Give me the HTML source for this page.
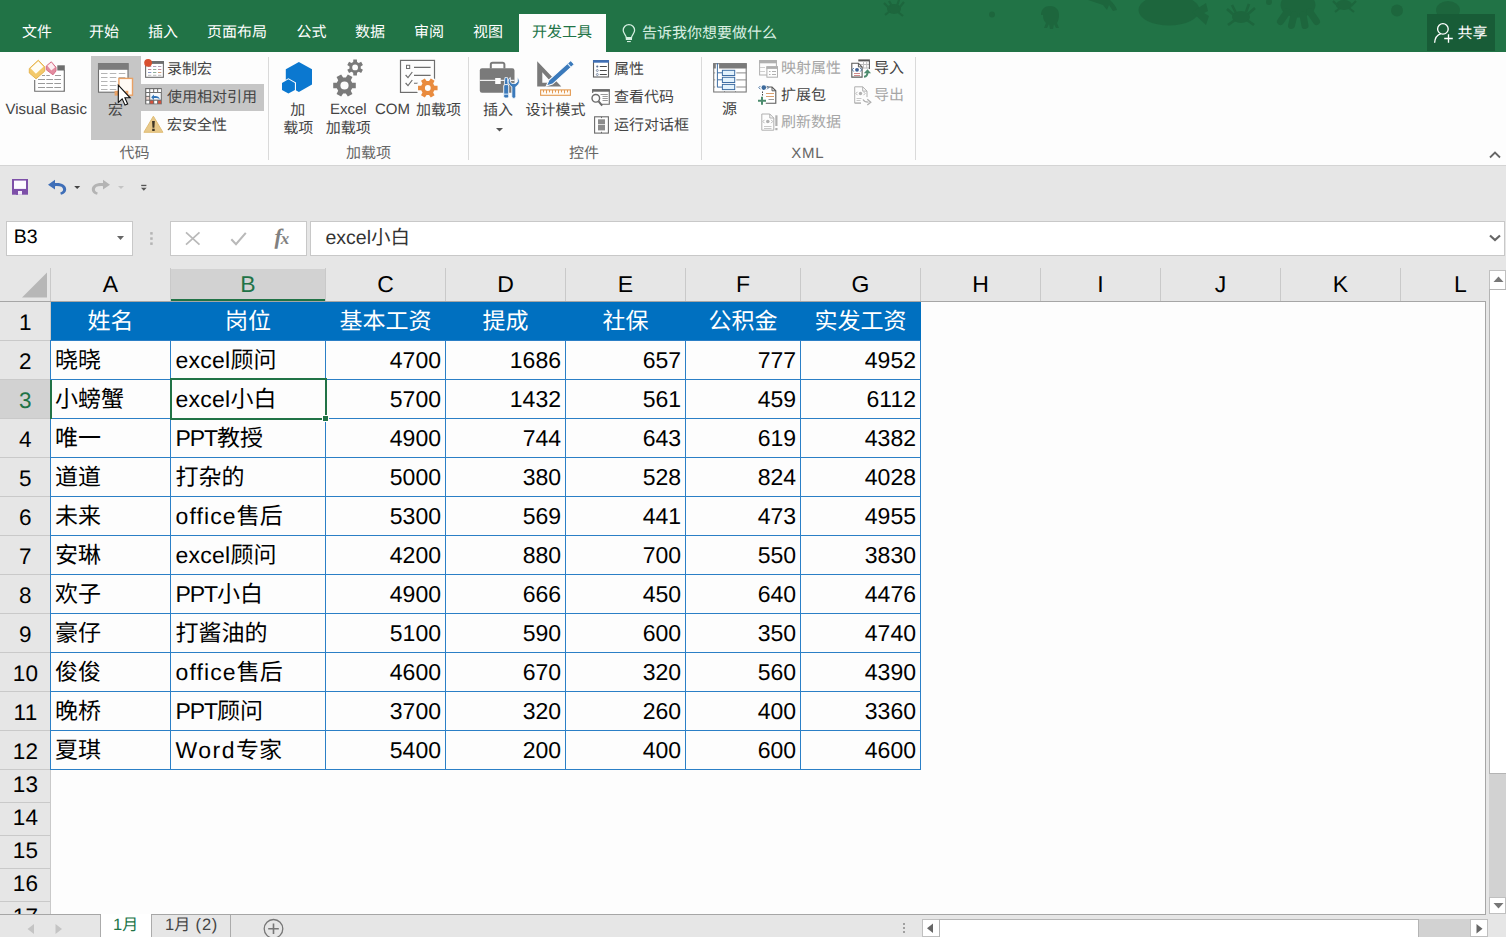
<!DOCTYPE html>
<html lang="zh-CN"><head><meta charset="utf-8"><title>Excel</title>
<style>
html,body{margin:0;padding:0}
body{width:1506px;height:937px;position:relative;overflow:hidden;background:#e6e6e6;font-family:"Liberation Sans","Noto Sans CJK SC",sans-serif;color:#000;text-rendering:geometricPrecision;-webkit-font-smoothing:antialiased}
svg.g{display:block;overflow:visible}
.cell{position:absolute;display:flex;align-items:center;white-space:pre;font-size:23px;line-height:23px}
.cell svg.g{display:inline-block;flex:none}
.cell span{position:relative;top:0.5px}
.ic{position:absolute;overflow:visible}
</style></head><body>

<div style="position:absolute;left:0px;top:0px;width:1506px;height:52px;background:#217346;"></div>
<svg style="position:absolute;left:0;top:0;overflow:hidden" width="1506" height="52" viewBox="0 0 1506 52"><g fill="#1d663d"><ellipse cx="894" cy="9" rx="7" ry="5"/><path d="M884 3l5 5M904 2l-5 6M885 15l5-4M903 16l-5-4M889 1l3 5M899 0l-2 6" stroke="#1d663d" stroke-width="2.2" fill="none"/><circle cx="992" cy="14.5" r="3"/><path d="M1041 15c0-6 4-9 9-9s9 3 9 9c0 4-1 6-2 8l2 5h-3l-2-4-1 5h-3l-1-5-2 4h-3l2-5c-2-2-3-4-3-8z"/><path d="M1088 0h22c3 3 6 6 7 10l-4 1-4-6-2 5-4-5-6-2z"/><ellipse cx="1169" cy="10" rx="30.500" ry="15.500"/><path d="M1192 12l14-9 2 8-4 2 5 3-3 9z"/><ellipse cx="1241" cy="17" rx="9" ry="6"/><path d="M1227 9l7 6M1255 8l-7 6M1228 25l7-5M1254 25l-7-5M1232 5l4 8M1249 4l-3 8" stroke="#1d663d" stroke-width="2.6" fill="none"/><ellipse cx="1298" cy="5" rx="17.500" ry="12.500"/><path d="M1287 12l-6.500 9.500M1294 15l-2.500 10.500M1303 15l2 10.500M1310 12l6.500 9.500" stroke="#1d663d" stroke-width="7" stroke-linecap="round" fill="none"/><circle cx="1269" cy="2" r="3"/><ellipse cx="1344" cy="5" rx="8" ry="5"/><path d="M1333 1l5 5M1356 1l-5 5M1335 12l5-4M1354 12l-5-4" stroke="#1d663d" stroke-width="2.2" fill="none"/><circle cx="1397" cy="10.5" r="6"/><ellipse cx="1448" cy="10" rx="12" ry="9"/></g></svg>
<div style="position:absolute;left:22.00px;top:24.50px;font-size:15px;line-height:15px;color:#fff;white-space:pre;">文件</div>
<div style="position:absolute;left:89.00px;top:24.50px;font-size:15px;line-height:15px;color:#fff;white-space:pre;">开始</div>
<div style="position:absolute;left:148.00px;top:24.50px;font-size:15px;line-height:15px;color:#fff;white-space:pre;">插入</div>
<div style="position:absolute;left:207.00px;top:24.50px;font-size:15px;line-height:15px;color:#fff;white-space:pre;">页面布局</div>
<div style="position:absolute;left:296.50px;top:24.50px;font-size:15px;line-height:15px;color:#fff;white-space:pre;">公式</div>
<div style="position:absolute;left:355.00px;top:24.50px;font-size:15px;line-height:15px;color:#fff;white-space:pre;">数据</div>
<div style="position:absolute;left:414.00px;top:24.50px;font-size:15px;line-height:15px;color:#fff;white-space:pre;">审阅</div>
<div style="position:absolute;left:473.00px;top:24.50px;font-size:15px;line-height:15px;color:#fff;white-space:pre;">视图</div>
<div style="position:absolute;left:519px;top:14px;width:87px;height:38px;background:#fdfdfd;"></div>
<div style="position:absolute;left:532.00px;top:24.50px;font-size:15px;line-height:15px;color:#217346;white-space:pre;">开发工具</div>
<svg class="ic" style="left:0;top:0" width="1506" height="52" viewBox="0 0 1506 52"><g fill="none" stroke="#d6f0e2" stroke-width="1.25"><path d="M626.300 37.700c0-2.500-3.100-3.900-3.100-7.400a5.700 5.700 0 0 1 11.400 0c0 3.500-3.100 4.900-3.100 7.400z"/></g><rect x="625.8" y="37.4" width="6.2" height="2.6" fill="#d6f0e2"/><rect x="627" y="41" width="3.8" height="1.1" fill="#d6f0e2"/></svg>
<div style="position:absolute;left:642.00px;top:25.80px;font-size:15px;line-height:15px;color:#d9efe2;white-space:pre;">告诉我你想要做什么</div>
<div style="position:absolute;left:1427px;top:14px;width:68px;height:37px;background:#185c37;"></div>
<svg class="ic" style="left:0;top:0" width="1506" height="52" viewBox="0 0 1506 52"><g fill="none" stroke="#fff" stroke-width="1.35"><circle cx="1442.9" cy="28.9" r="5.3"/><path d="M1434.6 42.8c0.3-4.6 2.6-7.9 6.2-9.2"/><path d="M1448.5 34.2v8.6M1444.2 38.5h8.6"/></g></svg>
<div style="position:absolute;left:1457.50px;top:25.50px;font-size:15px;line-height:15px;color:#fff;white-space:pre;">共享</div>
<div style="position:absolute;left:0px;top:52px;width:1506px;height:113px;background:#fdfdfd;"></div>
<div style="position:absolute;left:0px;top:165px;width:1506px;height:1px;background:#d4d4d4;"></div>
<div style="position:absolute;left:268px;top:57px;width:1px;height:103px;background:#dadada;"></div>
<div style="position:absolute;left:468px;top:57px;width:1px;height:103px;background:#dadada;"></div>
<div style="position:absolute;left:701px;top:57px;width:1px;height:103px;background:#dadada;"></div>
<div style="position:absolute;left:915px;top:57px;width:1px;height:103px;background:#dadada;"></div>
<div style="position:absolute;left:91px;top:56px;width:50px;height:84px;background:#c6c6c6;"></div>
<div style="position:absolute;left:141px;top:84.2px;width:123px;height:26.5px;background:#c6c6c6;"></div>
<div style="position:absolute;left:5.50px;top:102.30px;font-size:15px;line-height:15px;color:#444;white-space:pre;">Visual Basic</div>
<div style="position:absolute;left:108.00px;top:102.50px;font-size:15px;line-height:15px;color:#444;white-space:pre;">宏</div>
<div style="position:absolute;left:167.00px;top:62.00px;font-size:15px;line-height:15px;color:#444;white-space:pre;">录制宏</div>
<div style="position:absolute;left:167.00px;top:90.00px;font-size:15px;line-height:15px;color:#444;white-space:pre;">使用相对引用</div>
<div style="position:absolute;left:167.00px;top:118.00px;font-size:15px;line-height:15px;color:#444;white-space:pre;">宏安全性</div>
<div style="position:absolute;left:119.50px;top:145.50px;font-size:15px;line-height:15px;color:#666;white-space:pre;">代码</div>
<div style="position:absolute;left:290.25px;top:102.50px;font-size:15px;line-height:15px;color:#444;white-space:pre;">加</div>
<div style="position:absolute;left:283.25px;top:121.25px;font-size:15px;line-height:15px;color:#444;white-space:pre;">载项</div>
<div style="position:absolute;left:148.25px;width:400px;text-align:center;top:102.30px;font-size:15px;line-height:15px;color:#444;white-space:pre;">Excel</div>
<div style="position:absolute;left:325.75px;top:121.25px;font-size:15px;line-height:15px;color:#444;white-space:pre;">加载项</div>
<div style="position:absolute;left:375.00px;top:102.30px;font-size:15px;line-height:15px;color:#444;white-space:pre;">COM</div>
<div style="position:absolute;left:416.00px;top:102.50px;font-size:15px;line-height:15px;color:#444;white-space:pre;">加载项</div>
<div style="position:absolute;left:346.00px;top:145.50px;font-size:15px;line-height:15px;color:#666;white-space:pre;">加载项</div>
<div style="position:absolute;left:483.00px;top:102.50px;font-size:15px;line-height:15px;color:#444;white-space:pre;">插入</div>
<svg class="ic" style="left:496px;top:128px" width="8" height="4"><path d="M0 0h7l-3.5 3.5z" fill="#555"/></svg>
<div style="position:absolute;left:525.50px;top:102.50px;font-size:15px;line-height:15px;color:#444;white-space:pre;">设计模式</div>
<div style="position:absolute;left:614.00px;top:62.00px;font-size:15px;line-height:15px;color:#444;white-space:pre;">属性</div>
<div style="position:absolute;left:614.00px;top:90.00px;font-size:15px;line-height:15px;color:#444;white-space:pre;">查看代码</div>
<div style="position:absolute;left:614.00px;top:118.00px;font-size:15px;line-height:15px;color:#444;white-space:pre;">运行对话框</div>
<div style="position:absolute;left:569.00px;top:145.50px;font-size:15px;line-height:15px;color:#666;white-space:pre;">控件</div>
<div style="position:absolute;left:722.00px;top:102.10px;font-size:15px;line-height:15px;color:#444;white-space:pre;">源</div>
<div style="position:absolute;left:781.00px;top:61.30px;font-size:15px;line-height:15px;color:#a6a6a6;white-space:pre;">映射属性</div>
<div style="position:absolute;left:781.00px;top:88.00px;font-size:15px;line-height:15px;color:#444;white-space:pre;">扩展包</div>
<div style="position:absolute;left:781.00px;top:115.00px;font-size:15px;line-height:15px;color:#a6a6a6;white-space:pre;">刷新数据</div>
<div style="position:absolute;left:874.00px;top:61.30px;font-size:15px;line-height:15px;color:#444;white-space:pre;">导入</div>
<div style="position:absolute;left:874.00px;top:88.00px;font-size:15px;line-height:15px;color:#a6a6a6;white-space:pre;">导出</div>
<div style="position:absolute;left:607.80px;width:400px;text-align:center;top:146.10px;font-size:15px;line-height:15px;color:#666;white-space:pre;letter-spacing:0.8px">XML</div>
<svg class="ic" style="left:1489px;top:150px" width="12" height="9"><path d="M1 7.5l5-5 5 5" fill="none" stroke="#666" stroke-width="1.8"/></svg>
<svg class="ic" style="left:0;top:0" width="1506" height="165" viewBox="0 0 1506 165"><path d="M34.7 80V91.2H64.3V70.4" fill="#fff" stroke="#6e6e6e" stroke-width="1.1"/><path d="M45 71h12.3v-5.2h7.4v25.4" fill="#fff" stroke="none"/><rect x="57.3" y="65.3" width="7.5" height="5.2" fill="#6e6e6e"/><path d="M64.3 70V91.2" stroke="#6e6e6e" stroke-width="1.1"/><path d="M42 75.5H45M46.3 75.5H49.8M55 75.5H61" stroke="#9a9a9a" stroke-width="1" fill="none"/><path d="M38 79.5H45M46.3 79.5H53M54.3 79.5H61M38 83.5H45M46.3 83.5H53M54.3 83.5H61M38 87.5H45M46.3 87.5H53M54.3 87.5H61" stroke="#9a9a9a" stroke-width="1" fill="none"/><path d="M29.3 68.5l9-8.3 6.4 6.6v4.4l-8.6 7.6-6.8-5.8z" fill="#f3c96b" stroke="#e6b450" stroke-width="1"/><path d="M30.6 68.3l7.7-7 5.2 5.5-7.6 6.9z" fill="#fffdf6"/><path d="M46.3 66l5-4.2 4.7 5.5v3.7l-3 3.8-6.7-5z" fill="#e38ca0" stroke="#d66f88" stroke-width="1"/><path d="M47.4 65.7l3.9-3.1 3.8 4.6-3.8 3.3z" fill="#fdeef2"/><rect x="98.5" y="63.7" width="29.5" height="28.5" fill="#fff" stroke="#6e6e6e" stroke-width="1.1"/><rect x="98" y="63.2" width="30.5" height="6.6" fill="#7c7c7c"/><path d="M101 73.5H107.5M109.8 73.5H116.3M118.8 73.5H125.3M101 77.5H107.5M109.8 77.5H116.3M118.8 77.5H125.3M101 81.5H107.5M109.8 81.5H116.3M118.8 81.5H125.3M101 85.5H107.5M109.8 85.5H116.3M118.8 85.5H125.3M101 89.5H107.5M109.8 89.5H116.3M118.8 89.5H125.3" stroke="#b5b5b5" stroke-width="1" fill="none"/><rect x="114.6" y="90.8" width="4.4" height="4.8" fill="#e9a165"/><rect x="118.9" y="78.4" width="13.6" height="16.8" fill="#fffaf5" stroke="#e9a165" stroke-width="1.4"/><rect x="125.3" y="90.8" width="3" height="3.6" fill="#e9a165"/><path d="M118.3 85.2v17.2l3.9-3.6 2.8 6.3 2.7-1.2-2.8-6.1h5.2z" fill="#fff" stroke="#111" stroke-width="1.1" stroke-linejoin="miter"/><rect x="145.6" y="61.6" width="17.8" height="15.7" fill="#fff" stroke="#6e6e6e" stroke-width="1.1"/><rect x="151" y="61.1" width="13" height="2.8" fill="#6e6e6e"/><path d="M148 66.5H151.3M153 66.5H156.3M158 66.5H161.3" stroke="#b0a0b8" stroke-width="1" fill="none"/><path d="M148 69.5H151.3" stroke="#c58a9a" stroke-width="1" fill="none"/><path d="M153 69.5H156.3" stroke="#8fae9a" stroke-width="1" fill="none"/><path d="M158 69.5H161.3" stroke="#c58a9a" stroke-width="1" fill="none"/><path d="M148 72.5H151.3" stroke="#8a9ac8" stroke-width="1" fill="none"/><path d="M153 72.5H156.3" stroke="#8fae9a" stroke-width="1" fill="none"/><path d="M158 72.5H161.3" stroke="#d09a7a" stroke-width="1" fill="none"/><path d="M148 75.3H151.3M153 75.3H156.3M158 75.3H161.3" stroke="#bbb" stroke-width="1" fill="none"/><circle cx="148.1" cy="62.8" r="3.9" fill="#d9502f"/><rect x="145.1" y="88" width="16.7" height="16.3" fill="#6e6e6e"/><rect x="146.30" y="89.20" width="2.9" height="2.8" fill="#fff"/><rect x="150.25" y="89.20" width="2.9" height="2.8" fill="#fff"/><rect x="154.20" y="89.20" width="2.9" height="2.8" fill="#fff"/><rect x="158.15" y="89.20" width="2.9" height="2.8" fill="#fff"/><rect x="146.30" y="93.05" width="2.9" height="2.8" fill="#fff"/><rect x="146.30" y="96.90" width="2.9" height="2.8" fill="#f3d7cf"/><rect x="146.30" y="100.75" width="2.9" height="2.8" fill="#fff"/><rect x="150.25" y="100.75" width="2.9" height="2.8" fill="#d8503a"/><rect x="154.20" y="100.75" width="2.9" height="2.8" fill="#fff"/><rect x="158.15" y="100.75" width="2.9" height="2.8" fill="#d8503a"/><rect x="150.2" y="93" width="10.6" height="6.6" fill="#f6f9fc"/><path d="M151.2 97.3l2.7-2.8v1.7c3-.4 5.3.6 5.9 3.2-1.300-1.200-3.200-1.500-5.900-1.300v1.900z" fill="#2f73b7"/><path d="M153.4 116.2l9.500 16.100h-19z" fill="#e8c98a" stroke="#e0bd76" stroke-width="1" stroke-linejoin="round"/><path d="M152.100 121h2.700l-.4 6.800h-1.900z" fill="#3c3424"/><rect x="152.200" y="128.700" width="2.500" height="2.300" fill="#3c3424"/><path d="M298.9 62l13.100 7.300v15.300l-13.100 7.500-13.100-7.500v-15.300z" fill="#0b78d0"/><path d="M288.400 78.200l7.600 4.200v8l-7.600 4.300-7.400-4.300v-8z" fill="#fdfdfd"/><path d="M288.400 79.300l6.500 3.600v7l-6.500 3.700-6.400-3.700v-7z" fill="#0b78d0"/><path d="M352.19 82.64L355.79 82.85L355.79 88.15L352.19 88.36L350.82 90.73L352.44 93.96L347.85 96.60L345.87 93.59L343.13 93.59L341.15 96.60L336.56 93.96L338.18 90.73L336.81 88.36L333.21 88.15L333.21 82.85L336.81 82.64L338.18 80.27L336.56 77.04L341.15 74.40L343.13 77.41L345.87 77.41L347.85 74.40L352.44 77.04L350.82 80.27ZM340.40 85.50a4.1 4.1 0 1 0 8.2 0a4.1 4.1 0 1 0 -8.2 0Z" fill="#7a7a7a" fill-rule="evenodd"/><path d="M360.71 68.41L362.92 69.85L361.14 72.95L358.78 71.75L357.03 72.76L356.89 75.40L353.31 75.40L353.17 72.76L351.42 71.75L349.06 72.95L347.28 69.85L349.49 68.41L349.49 66.39L347.28 64.95L349.06 61.85L351.42 63.05L353.17 62.04L353.31 59.40L356.89 59.40L357.03 62.04L358.78 63.05L361.14 61.85L362.92 64.95L360.71 66.39ZM352.20 67.40a2.9 2.9 0 1 0 5.8 0a2.9 2.9 0 1 0 -5.8 0Z" fill="#7a7a7a" fill-rule="evenodd"/><rect x="400.500" y="60.400" width="34" height="32" fill="#fdfdfd" stroke="#6e6e6e" stroke-width="1.200"/><rect x="406.500" y="65.300" width="3.200" height="3.200" fill="none" stroke="#6e6e6e" stroke-width="1"/><path d="M414 67.400h16.600M414 75.400h16.600M414 83.200h7" stroke="#6e6e6e" stroke-width="1.100"/><path d="M405.600 75l2.400 2.600 4.300-5.600M405.600 83l2.400 2.600 4.300-5.600" fill="none" stroke="#6e6e6e" stroke-width="1.200"/><circle cx="427.800" cy="88" r="11.300" fill="#fdfdfd"/><path d="M434.39 85.63L437.56 85.82L437.56 90.18L434.39 90.37L433.15 92.52L434.57 95.36L430.79 97.54L429.04 94.89L426.56 94.89L424.81 97.54L421.03 95.36L422.45 92.52L421.21 90.37L418.04 90.18L418.04 85.82L421.21 85.63L422.45 83.48L421.03 80.64L424.81 78.46L426.56 81.11L429.04 81.11L430.79 78.46L434.57 80.64L433.15 83.48ZM424.90 88.00a2.9 2.9 0 1 0 5.8 0a2.9 2.9 0 1 0 -5.8 0Z" fill="#e98b3e" fill-rule="evenodd"/><path d="M490.800 68.500v-4a1.800 1.800 0 0 1 1.800-1.800h10a1.800 1.800 0 0 1 1.800 1.800v4" fill="none" stroke="#7a7a7a" stroke-width="2"/><rect x="479.800" y="68.200" width="34.700" height="24.500" rx="2.200" fill="#7a7a7a"/><rect x="479.800" y="79.800" width="34.700" height="1.100" fill="#fdfdfd"/><rect x="495.200" y="78" width="5.500" height="6" fill="#fdfdfd"/><rect x="502.600" y="76.800" width="16.500" height="22" fill="#fdfdfd" opacity="0"/><path d="M504.900 77.600h2.600l.6 7.200h-3.800z" fill="#3b7abb" stroke="#fdfdfd" stroke-width=".8"/><rect x="503.700" y="84.600" width="5" height="13.400" rx="1.400" fill="#3b7abb" stroke="#fdfdfd" stroke-width=".9"/><rect x="503.700" y="93.600" width="5" height="1.100" fill="#d6e9fa"/><path d="M510.300 77.500c-2.600 1.700-3 6 .4 8.500l1.100.8v9.600a2 2 0 0 0 4 0v-9.600l1.100-.8c3.400-2.500 3-6.800.4-8.500v4.400l-1.700 1.500h-3.600l-1.700-1.500z" fill="#3b7abb" stroke="#fdfdfd" stroke-width=".9"/><path d="M537.200 61.300v25.200h24.100zM542.300 72.300l9.400 10.400h-9.400z" fill="#7a7a7a" fill-rule="evenodd"/><path d="M546.30 86.10L552.56 84.08L574.41 64.30L570.79 60.30L548.94 80.07Z" fill="#3b7abb" stroke="#fdfdfd" stroke-width="1.100"/><path d="M571.08 67.32L567.45 63.32" stroke="#e4f0fb" stroke-width="1.100"/><rect x="540.600" y="89.900" width="29.800" height="5.400" fill="#fffaf4" stroke="#e39a52" stroke-width="1.100"/><path d="M543.500 90v2.400M546.500 90v3.400M549.500 90v2.400M552.500 90v3.400M555.500 90v2.400M558.500 90v3.400M561.500 90v2.400M564.500 90v3.400M567.500 90v2.400" stroke="#e39a52" stroke-width="1"/><rect x="593.500" y="60.600" width="15" height="16.400" fill="#fff" stroke="#5e5e5e" stroke-width="1.100"/><rect x="593" y="60.100" width="16" height="2.600" fill="#3f6fb6"/><path d="M599.800 66.500h7M599.800 70.500h7M599.800 74.500h7" stroke="#4a4a4a" stroke-width="1.200"/><circle cx="597.300" cy="66.500" r="1.100" fill="#5a6e8e"/><circle cx="597.300" cy="70.500" r="1" fill="none" stroke="#5a6e8e" stroke-width=".7"/><circle cx="597.300" cy="74.500" r="1" fill="none" stroke="#5a6e8e" stroke-width=".7"/><path d="M592.700 93v-3.200h16.600v14.400h-7.500" fill="#fff" stroke="#6a6a6a" stroke-width="1.100"/><rect x="592.200" y="89.300" width="17.600" height="2.400" fill="#6a6a6a"/><path d="M600.500 94.500h7.300M602.500 96.500h5.300M602.500 98.500h5.300M602.500 100.500h5.300" stroke="#9a9a9a" stroke-width="1"/><circle cx="595.800" cy="98.300" r="3.800" fill="#fdfdfd" stroke="#6a6a6a" stroke-width="1.400"/><path d="M598.600 101.400l3.600 4.300" stroke="#6a6a6a" stroke-width="2"/><rect x="594.600" y="116.800" width="13.800" height="16.300" fill="#fff" stroke="#6a6a6a" stroke-width="1.100"/><rect x="598" y="119.300" width="7" height="11.100" fill="#8c8c8c"/><rect x="598" y="124" width="7" height="1" fill="#dcdcdc"/><path d="M601.500 116.800v1.300M601.500 131.800v1.300" stroke="#6a6a6a" stroke-width="1"/><rect x="713.700" y="63.700" width="32.500" height="28.300" fill="#fff" stroke="#7a7a7a" stroke-width="1.100"/><rect x="713.200" y="63.200" width="2.600" height="5.300" fill="#7a7a7a"/><rect x="719.100" y="63.200" width="27.600" height="5.300" fill="#7a7a7a"/><path d="M717.400 63.200v24.100M717.400 72.800h5M717.400 79.800h5M717.400 87.100h5" stroke="#3f6ea3" stroke-width="1" fill="none"/><rect x="722.400" y="70.3" width="12.300" height="5.200" fill="#e3f2fc" stroke="#3f6ea3" stroke-width="1"/><rect x="722.400" y="77.3" width="12.300" height="5.200" fill="#e3f2fc" stroke="#3f6ea3" stroke-width="1"/><rect x="722.400" y="84.400" width="12.300" height="5.200" fill="#e3f2fc" stroke="#3f6ea3" stroke-width="1"/><path d="M736.300 72.900h10M736.300 79.900h10M736.300 87h10" stroke="#8a8a8a" stroke-width="1"/><path d="M713.700 72.900h1.500M713.700 79.900h1.500M713.700 87h1.500M724.500 91v1M735.500 91v1" stroke="#8a8a8a" stroke-width="1"/><rect x="759.600" y="60.600" width="16.800" height="14.400" fill="#fdfdfd" stroke="#b0b0b0" stroke-width="1"/><rect x="759.100" y="60.100" width="17.800" height="3.200" fill="#b0b0b0"/><path d="M760 67.500h5M760 71.500h5" stroke="#cfcfcf" stroke-width="1"/><rect x="766.900" y="66.800" width="10.600" height="10.400" fill="#fdfdfd" stroke="#b0b0b0" stroke-width="1"/><rect x="766.400" y="66.300" width="11.600" height="2.600" fill="#b0b0b0"/><path d="M769 71.500h1.500M772 71.500h4M769 74.500h1.500M772 74.500h4" stroke="#b0b0b0" stroke-width="1"/><path d="M766.500 87h5.500l3.800 3.800v12.500h-10" fill="#fff" stroke="#5a5a5a" stroke-width="1.100"/><path d="M772 87v3.800h3.800" fill="none" stroke="#5a5a5a" stroke-width="1"/><path d="M766 93.500h8M766 96.500h8" stroke="#d9a070" stroke-width="1"/><path d="M768.500 99.500h5.500" stroke="#9a9a9a" stroke-width="1"/><circle cx="763.800" cy="87.600" r="2.300" fill="#3d6a9c"/><path d="M760.500 85.900l-1.700 1.700 1.700 1.700M767.100 85.900l1.700 1.700-1.700 1.700" fill="none" stroke="#3d6a9c" stroke-width=".9"/><path d="M762.500 91.500v4.200" stroke="#4a4a4a" stroke-width="1" stroke-dasharray="1.500 1"/><path d="M762 96.800v8M758 100.800h8" stroke="#4c8c6e" stroke-width="2"/><path d="M761.800 114h8l4 4v12.200h-12z" fill="#fdfdfd" stroke="#b0b0b0" stroke-width="1"/><path d="M769.800 114v4h4" fill="none" stroke="#b0b0b0" stroke-width="1"/><circle cx="767.800" cy="121.500" r="1.800" fill="#b0b0b0"/><path d="M764.500 119.800l-1.600 1.700 1.600 1.700M771.100 119.800l1.600 1.700-1.600 1.700" fill="none" stroke="#b0b0b0" stroke-width=".9"/><path d="M764 126.500h7.500M764 128.500h7.500" stroke="#c8c8c8" stroke-width="1"/><rect x="775.300" y="115.300" width="2.200" height="10.700" fill="#b0b0b0"/><rect x="775.300" y="128" width="2.200" height="2.200" fill="#b0b0b0"/><rect x="858.300" y="59.400" width="11.600" height="2" fill="#555"/><path d="M863.500 61v7.300M866.700 61v7.300M860 64.500h9.500M860 68h9.500" stroke="#bdbdbd" stroke-width="1"/><path d="M869.400 61v8" stroke="#555" stroke-width="1"/><path d="M851.800 63.200h6.600l3.700 3.700v10.200h-10.300z" fill="#fff" stroke="#5a5a5a" stroke-width="1.100"/><path d="M858.400 63.200v3.700h3.700" fill="none" stroke="#5a5a5a" stroke-width="1"/><circle cx="857" cy="69.800" r="1.900" fill="#3d5f94"/><path d="M853.800 68l-1.600 1.800 1.600 1.800M860.200 68l1.600 1.800-1.600 1.800" fill="none" stroke="#3d6a9c" stroke-width=".9"/><path d="M854 73.500h6M854 75.500h6" stroke="#d08a8a" stroke-width="1"/><path d="M864 76.800c2.600-.3 3.600-2 3.500-4.800" fill="none" stroke="#4c8c6e" stroke-width="2"/><path d="M863.800 73.200l3.700-4 3.500 4z" fill="#4c8c6e"/><path d="M854.700 86.800h8l4.300 4.300v6M861 103.100h-6.300z M854.700 86.800v16.300" fill="none" stroke="#b0b0b0" stroke-width="1"/><path d="M862.700 86.800v4.300h4.300" fill="none" stroke="#b0b0b0" stroke-width="1"/><circle cx="860.500" cy="93.500" r="1.700" fill="#b0b0b0"/><path d="M857.500 91.800l-1.600 1.700 1.600 1.700M863.500 91.800l1.600 1.700-1.600 1.700" fill="none" stroke="#b0b0b0" stroke-width=".9"/><path d="M856.500 98.500h5M856.500 100.500h4" stroke="#c8c8c8" stroke-width="1"/><path d="M863 99.500c1 2 2.600 2.700 5.500 2.600" fill="none" stroke="#b0b0b0" stroke-width="1.300"/><path d="M867.300 99.200l3.500 3-3.500 2.800" fill="none" stroke="#b0b0b0" stroke-width="1.300"/></svg>
<svg class="ic" style="left:0;top:0" width="1506" height="215" viewBox="0 0 1506 215"><rect x="12" y="179" width="16" height="15.700" fill="#7d4fa8"/><rect x="14" y="180.600" width="12" height="8.300" fill="#fdfaff"/><rect x="18" y="191" width="4" height="3.700" fill="#f3ecfa"/><rect x="16" y="190.200" width="2" height="4.500" fill="#7d4fa8"/><path d="M48 184.700l7-4.900v3.300c6.500-.6 11.200 2 11.200 6.300 0 2.700-1.900 4.500-5.200 5.400l-.8-2.300c2-.7 2.900-1.700 2.900-3.100 0-2.400-3-3.600-8.100-3.200v3.300z" fill="#3f6fb8"/><path d="M74.200 185.900h6l-3 3.100z" fill="#444"/><path d="M110 184.700l-7-4.900v3.300c-6.500-.6-11.200 2-11.200 6.300 0 2.700 1.900 4.500 5.200 5.400l.8-2.300c-2-.7-2.900-1.700-2.900-3.100 0-2.400 3-3.600 8.100-3.200v3.300z" fill="#b4b4b4"/><path d="M118 185.900h6l-3 3.100z" fill="#c4c4c4"/><rect x="141.200" y="184.800" width="5.200" height="1.300" fill="#555"/><path d="M141 187.800h5.600l-2.800 3z" fill="#555"/></svg>
<div style="position:absolute;left:6px;top:221px;width:126px;height:34px;background:#fff;border:1px solid #c8c8c8;box-sizing:border-box;width:127px;height:35px"></div>
<div style="position:absolute;left:170px;top:221px;width:137px;height:35px;background:#fff;border:1px solid #c8c8c8;box-sizing:border-box"></div>
<div style="position:absolute;left:310px;top:221px;width:1195px;height:35px;background:#fff;border:1px solid #c8c8c8;box-sizing:border-box"></div>
<div style="position:absolute;left:13.80px;top:228.49px;font-size:19.5px;line-height:19.5px;color:#000;white-space:pre;">B3</div>
<svg class="ic" style="left:117px;top:236px" width="8" height="5"><path d="M0 0h7l-3.500 4z" fill="#666"/></svg>
<svg class="ic" style="left:0;top:0" width="1506" height="260" viewBox="0 0 1506 260"><path d="M186 232.300l13.500 12.400M199.500 232.300l-13.500 12.400" stroke="#b9b9b9" stroke-width="1.700" fill="none"/><path d="M231.300 239.300l4.700 4.900 9.800-11.300" stroke="#b9b9b9" stroke-width="2.100" fill="none"/><rect x="150.200" y="232.1" width="2.500" height="2.500" fill="#b4b4b4"/><rect x="150.200" y="237.3" width="2.500" height="2.500" fill="#b4b4b4"/><rect x="150.200" y="242.4" width="2.500" height="2.500" fill="#b4b4b4"/></svg><div style="position:absolute;left:274.5px;top:224px;font-family:'Liberation Serif',serif;font-style:italic;font-weight:bold;font-size:22px;line-height:26px;color:#808080;letter-spacing:-1px"><span style="font-size:22px">f</span><span style="font-size:17px">x</span></div>
<div class="cell" style="left:325.5px;top:220.2px;height:35px;font-size:19.5px;line-height:20px;color:#333"><span>excel</span><span>小白</span></div>
<svg class="ic" style="left:1489px;top:234px" width="12" height="8"><path d="M1 1.500l5 4.500 5-4.500" fill="none" stroke="#666" stroke-width="2.2"/></svg>
<div style="position:absolute;left:51px;top:302px;width:1434px;height:612px;background:#fdfdfd;"></div>
<div style="position:absolute;left:171px;top:269px;width:154px;height:31px;background:#d2d2d2;"></div>
<div style="position:absolute;left:171px;top:299px;width:155px;height:3px;background:#217346;"></div>
<div style="position:absolute;left:50px;top:268px;width:1px;height:33px;background:#c9c9c9;"></div>
<div style="position:absolute;left:170px;top:268px;width:1px;height:33px;background:#c9c9c9;"></div>
<div style="position:absolute;left:325px;top:268px;width:1px;height:33px;background:#c9c9c9;"></div>
<div style="position:absolute;left:445px;top:268px;width:1px;height:33px;background:#c9c9c9;"></div>
<div style="position:absolute;left:565px;top:268px;width:1px;height:33px;background:#c9c9c9;"></div>
<div style="position:absolute;left:685px;top:268px;width:1px;height:33px;background:#c9c9c9;"></div>
<div style="position:absolute;left:800px;top:268px;width:1px;height:33px;background:#c9c9c9;"></div>
<div style="position:absolute;left:920px;top:268px;width:1px;height:33px;background:#c9c9c9;"></div>
<div style="position:absolute;left:1040px;top:268px;width:1px;height:33px;background:#c9c9c9;"></div>
<div style="position:absolute;left:1160px;top:268px;width:1px;height:33px;background:#c9c9c9;"></div>
<div style="position:absolute;left:1280px;top:268px;width:1px;height:33px;background:#c9c9c9;"></div>
<div style="position:absolute;left:1400px;top:268px;width:1px;height:33px;background:#c9c9c9;"></div>
<div style="position:absolute;left:0px;top:301px;width:1486px;height:1px;background:#a6a6a6;"></div>
<div style="position:absolute;left:-89.50px;width:400px;text-align:center;top:272.53px;font-size:23px;line-height:23px;color:#000;white-space:pre;">A</div>
<div style="position:absolute;left:48.00px;width:400px;text-align:center;top:272.53px;font-size:23px;line-height:23px;color:#217346;white-space:pre;">B</div>
<div style="position:absolute;left:185.50px;width:400px;text-align:center;top:272.53px;font-size:23px;line-height:23px;color:#000;white-space:pre;">C</div>
<div style="position:absolute;left:305.50px;width:400px;text-align:center;top:272.53px;font-size:23px;line-height:23px;color:#000;white-space:pre;">D</div>
<div style="position:absolute;left:425.50px;width:400px;text-align:center;top:272.53px;font-size:23px;line-height:23px;color:#000;white-space:pre;">E</div>
<div style="position:absolute;left:543.00px;width:400px;text-align:center;top:272.53px;font-size:23px;line-height:23px;color:#000;white-space:pre;">F</div>
<div style="position:absolute;left:660.50px;width:400px;text-align:center;top:272.53px;font-size:23px;line-height:23px;color:#000;white-space:pre;">G</div>
<div style="position:absolute;left:780.50px;width:400px;text-align:center;top:272.53px;font-size:23px;line-height:23px;color:#000;white-space:pre;">H</div>
<div style="position:absolute;left:900.50px;width:400px;text-align:center;top:272.53px;font-size:23px;line-height:23px;color:#000;white-space:pre;">I</div>
<div style="position:absolute;left:1020.50px;width:400px;text-align:center;top:272.53px;font-size:23px;line-height:23px;color:#000;white-space:pre;">J</div>
<div style="position:absolute;left:1140.50px;width:400px;text-align:center;top:272.53px;font-size:23px;line-height:23px;color:#000;white-space:pre;">K</div>
<div style="position:absolute;left:1260.50px;width:400px;text-align:center;top:272.53px;font-size:23px;line-height:23px;color:#000;white-space:pre;">L</div>
<svg class="ic" style="left:22px;top:272px" width="26" height="26"><path d="M25 0.5v25h-25z" fill="#b7b7b7"/></svg>
<div style="position:absolute;left:0px;top:380px;width:50px;height:38px;background:#d2d2d2;"></div>
<div style="position:absolute;left:0px;top:340px;width:50px;height:1px;background:#c9c9c9;"></div>
<div style="position:absolute;left:-174.50px;width:400px;text-align:center;top:312.35px;font-size:22.5px;line-height:22.5px;color:#000;white-space:pre;letter-spacing:0.3px">1</div>
<div style="position:absolute;left:0px;top:379px;width:50px;height:1px;background:#c9c9c9;"></div>
<div style="position:absolute;left:-174.50px;width:400px;text-align:center;top:351.35px;font-size:22.5px;line-height:22.5px;color:#000;white-space:pre;letter-spacing:0.3px">2</div>
<div style="position:absolute;left:0px;top:418px;width:50px;height:1px;background:#c9c9c9;"></div>
<div style="position:absolute;left:-174.50px;width:400px;text-align:center;top:390.35px;font-size:22.5px;line-height:22.5px;color:#217346;white-space:pre;letter-spacing:0.3px">3</div>
<div style="position:absolute;left:0px;top:457px;width:50px;height:1px;background:#c9c9c9;"></div>
<div style="position:absolute;left:-174.50px;width:400px;text-align:center;top:429.35px;font-size:22.5px;line-height:22.5px;color:#000;white-space:pre;letter-spacing:0.3px">4</div>
<div style="position:absolute;left:0px;top:496px;width:50px;height:1px;background:#c9c9c9;"></div>
<div style="position:absolute;left:-174.50px;width:400px;text-align:center;top:468.35px;font-size:22.5px;line-height:22.5px;color:#000;white-space:pre;letter-spacing:0.3px">5</div>
<div style="position:absolute;left:0px;top:535px;width:50px;height:1px;background:#c9c9c9;"></div>
<div style="position:absolute;left:-174.50px;width:400px;text-align:center;top:507.35px;font-size:22.5px;line-height:22.5px;color:#000;white-space:pre;letter-spacing:0.3px">6</div>
<div style="position:absolute;left:0px;top:574px;width:50px;height:1px;background:#c9c9c9;"></div>
<div style="position:absolute;left:-174.50px;width:400px;text-align:center;top:546.35px;font-size:22.5px;line-height:22.5px;color:#000;white-space:pre;letter-spacing:0.3px">7</div>
<div style="position:absolute;left:0px;top:613px;width:50px;height:1px;background:#c9c9c9;"></div>
<div style="position:absolute;left:-174.50px;width:400px;text-align:center;top:585.35px;font-size:22.5px;line-height:22.5px;color:#000;white-space:pre;letter-spacing:0.3px">8</div>
<div style="position:absolute;left:0px;top:652px;width:50px;height:1px;background:#c9c9c9;"></div>
<div style="position:absolute;left:-174.50px;width:400px;text-align:center;top:624.35px;font-size:22.5px;line-height:22.5px;color:#000;white-space:pre;letter-spacing:0.3px">9</div>
<div style="position:absolute;left:0px;top:691px;width:50px;height:1px;background:#c9c9c9;"></div>
<div style="position:absolute;left:-174.50px;width:400px;text-align:center;top:663.35px;font-size:22.5px;line-height:22.5px;color:#000;white-space:pre;letter-spacing:0.3px">10</div>
<div style="position:absolute;left:0px;top:730px;width:50px;height:1px;background:#c9c9c9;"></div>
<div style="position:absolute;left:-174.50px;width:400px;text-align:center;top:702.35px;font-size:22.5px;line-height:22.5px;color:#000;white-space:pre;letter-spacing:0.3px">11</div>
<div style="position:absolute;left:0px;top:769px;width:50px;height:1px;background:#c9c9c9;"></div>
<div style="position:absolute;left:-174.50px;width:400px;text-align:center;top:741.35px;font-size:22.5px;line-height:22.5px;color:#000;white-space:pre;letter-spacing:0.3px">12</div>
<div style="position:absolute;left:0px;top:802px;width:50px;height:1px;background:#c9c9c9;"></div>
<div style="position:absolute;left:-174.50px;width:400px;text-align:center;top:774.35px;font-size:22.5px;line-height:22.5px;color:#000;white-space:pre;letter-spacing:0.3px">13</div>
<div style="position:absolute;left:0px;top:835px;width:50px;height:1px;background:#c9c9c9;"></div>
<div style="position:absolute;left:-174.50px;width:400px;text-align:center;top:807.35px;font-size:22.5px;line-height:22.5px;color:#000;white-space:pre;letter-spacing:0.3px">14</div>
<div style="position:absolute;left:0px;top:868px;width:50px;height:1px;background:#c9c9c9;"></div>
<div style="position:absolute;left:-174.50px;width:400px;text-align:center;top:840.35px;font-size:22.5px;line-height:22.5px;color:#000;white-space:pre;letter-spacing:0.3px">15</div>
<div style="position:absolute;left:0px;top:901px;width:50px;height:1px;background:#c9c9c9;"></div>
<div style="position:absolute;left:-174.50px;width:400px;text-align:center;top:873.35px;font-size:22.5px;line-height:22.5px;color:#000;white-space:pre;letter-spacing:0.3px">16</div>
<div style="position:absolute;left:0px;top:934px;width:50px;height:1px;background:#c9c9c9;"></div>
<div style="position:absolute;left:-174.50px;width:400px;text-align:center;top:906.35px;font-size:22.5px;line-height:22.5px;color:#000;white-space:pre;letter-spacing:0.3px">17</div>
<div style="position:absolute;left:50px;top:302px;width:1px;height:612px;background:#c9c9c9;"></div>
<div style="position:absolute;left:51px;top:302px;width:870px;height:38px;background:#0070c0;"></div>
<div style="position:absolute;left:87.50px;top:309.75px;font-size:23px;line-height:23px;color:#fff;white-space:pre;">姓名</div>
<div style="position:absolute;left:225.00px;top:309.75px;font-size:23px;line-height:23px;color:#fff;white-space:pre;">岗位</div>
<div style="position:absolute;left:339.50px;top:309.75px;font-size:23px;line-height:23px;color:#fff;white-space:pre;">基本工资</div>
<div style="position:absolute;left:482.50px;top:309.75px;font-size:23px;line-height:23px;color:#fff;white-space:pre;">提成</div>
<div style="position:absolute;left:602.50px;top:309.75px;font-size:23px;line-height:23px;color:#fff;white-space:pre;">社保</div>
<div style="position:absolute;left:708.50px;top:309.75px;font-size:23px;line-height:23px;color:#fff;white-space:pre;">公积金</div>
<div style="position:absolute;left:814.50px;top:309.75px;font-size:23px;line-height:23px;color:#fff;white-space:pre;">实发工资</div>
<div style="position:absolute;left:50px;top:340px;width:871px;height:1px;background:#2b7fc6;"></div>
<div style="position:absolute;left:50px;top:379px;width:871px;height:1px;background:#2b7fc6;"></div>
<div style="position:absolute;left:50px;top:418px;width:871px;height:1px;background:#2b7fc6;"></div>
<div style="position:absolute;left:50px;top:457px;width:871px;height:1px;background:#2b7fc6;"></div>
<div style="position:absolute;left:50px;top:496px;width:871px;height:1px;background:#2b7fc6;"></div>
<div style="position:absolute;left:50px;top:535px;width:871px;height:1px;background:#2b7fc6;"></div>
<div style="position:absolute;left:50px;top:574px;width:871px;height:1px;background:#2b7fc6;"></div>
<div style="position:absolute;left:50px;top:613px;width:871px;height:1px;background:#2b7fc6;"></div>
<div style="position:absolute;left:50px;top:652px;width:871px;height:1px;background:#2b7fc6;"></div>
<div style="position:absolute;left:50px;top:691px;width:871px;height:1px;background:#2b7fc6;"></div>
<div style="position:absolute;left:50px;top:730px;width:871px;height:1px;background:#2b7fc6;"></div>
<div style="position:absolute;left:50px;top:769px;width:871px;height:1px;background:#2b7fc6;"></div>
<div style="position:absolute;left:50px;top:340px;width:1px;height:430px;background:#2b7fc6;"></div>
<div style="position:absolute;left:170px;top:340px;width:1px;height:430px;background:#2b7fc6;"></div>
<div style="position:absolute;left:325px;top:340px;width:1px;height:430px;background:#2b7fc6;"></div>
<div style="position:absolute;left:445px;top:340px;width:1px;height:430px;background:#2b7fc6;"></div>
<div style="position:absolute;left:565px;top:340px;width:1px;height:430px;background:#2b7fc6;"></div>
<div style="position:absolute;left:685px;top:340px;width:1px;height:430px;background:#2b7fc6;"></div>
<div style="position:absolute;left:800px;top:340px;width:1px;height:430px;background:#2b7fc6;"></div>
<div style="position:absolute;left:920px;top:340px;width:1px;height:430px;background:#2b7fc6;"></div>
<div class="cell" style="left:55px;top:341px;height:38px"><span>晓晓</span></div>
<div class="cell" style="left:175.5px;top:341px;height:38px"><span style="letter-spacing:0.25px">excel</span><span>顾问</span></div>
<div style="position:absolute;left:41.00px;width:400px;text-align:right;top:348.53px;font-size:23px;line-height:23px;color:#000;white-space:pre;">4700</div>
<div style="position:absolute;left:161.00px;width:400px;text-align:right;top:348.53px;font-size:23px;line-height:23px;color:#000;white-space:pre;">1686</div>
<div style="position:absolute;left:281.00px;width:400px;text-align:right;top:348.53px;font-size:23px;line-height:23px;color:#000;white-space:pre;">657</div>
<div style="position:absolute;left:396.00px;width:400px;text-align:right;top:348.53px;font-size:23px;line-height:23px;color:#000;white-space:pre;">777</div>
<div style="position:absolute;left:516.00px;width:400px;text-align:right;top:348.53px;font-size:23px;line-height:23px;color:#000;white-space:pre;">4952</div>
<div class="cell" style="left:55px;top:380px;height:38px"><span>小螃蟹</span></div>
<div class="cell" style="left:175.5px;top:380px;height:38px"><span style="letter-spacing:0.25px">excel</span><span>小白</span></div>
<div style="position:absolute;left:41.00px;width:400px;text-align:right;top:387.53px;font-size:23px;line-height:23px;color:#000;white-space:pre;">5700</div>
<div style="position:absolute;left:161.00px;width:400px;text-align:right;top:387.53px;font-size:23px;line-height:23px;color:#000;white-space:pre;">1432</div>
<div style="position:absolute;left:281.00px;width:400px;text-align:right;top:387.53px;font-size:23px;line-height:23px;color:#000;white-space:pre;">561</div>
<div style="position:absolute;left:396.00px;width:400px;text-align:right;top:387.53px;font-size:23px;line-height:23px;color:#000;white-space:pre;">459</div>
<div style="position:absolute;left:516.00px;width:400px;text-align:right;top:387.53px;font-size:23px;line-height:23px;color:#000;white-space:pre;">6112</div>
<div class="cell" style="left:55px;top:419px;height:38px"><span>唯一</span></div>
<div class="cell" style="left:175.5px;top:419px;height:38px"><span style="letter-spacing:-1.1px">PPT</span><span>教授</span></div>
<div style="position:absolute;left:41.00px;width:400px;text-align:right;top:426.53px;font-size:23px;line-height:23px;color:#000;white-space:pre;">4900</div>
<div style="position:absolute;left:161.00px;width:400px;text-align:right;top:426.53px;font-size:23px;line-height:23px;color:#000;white-space:pre;">744</div>
<div style="position:absolute;left:281.00px;width:400px;text-align:right;top:426.53px;font-size:23px;line-height:23px;color:#000;white-space:pre;">643</div>
<div style="position:absolute;left:396.00px;width:400px;text-align:right;top:426.53px;font-size:23px;line-height:23px;color:#000;white-space:pre;">619</div>
<div style="position:absolute;left:516.00px;width:400px;text-align:right;top:426.53px;font-size:23px;line-height:23px;color:#000;white-space:pre;">4382</div>
<div class="cell" style="left:55px;top:458px;height:38px"><span>道道</span></div>
<div class="cell" style="left:175.5px;top:458px;height:38px"><span>打杂的</span></div>
<div style="position:absolute;left:41.00px;width:400px;text-align:right;top:465.53px;font-size:23px;line-height:23px;color:#000;white-space:pre;">5000</div>
<div style="position:absolute;left:161.00px;width:400px;text-align:right;top:465.53px;font-size:23px;line-height:23px;color:#000;white-space:pre;">380</div>
<div style="position:absolute;left:281.00px;width:400px;text-align:right;top:465.53px;font-size:23px;line-height:23px;color:#000;white-space:pre;">528</div>
<div style="position:absolute;left:396.00px;width:400px;text-align:right;top:465.53px;font-size:23px;line-height:23px;color:#000;white-space:pre;">824</div>
<div style="position:absolute;left:516.00px;width:400px;text-align:right;top:465.53px;font-size:23px;line-height:23px;color:#000;white-space:pre;">4028</div>
<div class="cell" style="left:55px;top:497px;height:38px"><span>未来</span></div>
<div class="cell" style="left:175.5px;top:497px;height:38px"><span style="letter-spacing:1.1px">office</span><span>售后</span></div>
<div style="position:absolute;left:41.00px;width:400px;text-align:right;top:504.53px;font-size:23px;line-height:23px;color:#000;white-space:pre;">5300</div>
<div style="position:absolute;left:161.00px;width:400px;text-align:right;top:504.53px;font-size:23px;line-height:23px;color:#000;white-space:pre;">569</div>
<div style="position:absolute;left:281.00px;width:400px;text-align:right;top:504.53px;font-size:23px;line-height:23px;color:#000;white-space:pre;">441</div>
<div style="position:absolute;left:396.00px;width:400px;text-align:right;top:504.53px;font-size:23px;line-height:23px;color:#000;white-space:pre;">473</div>
<div style="position:absolute;left:516.00px;width:400px;text-align:right;top:504.53px;font-size:23px;line-height:23px;color:#000;white-space:pre;">4955</div>
<div class="cell" style="left:55px;top:536px;height:38px"><span>安琳</span></div>
<div class="cell" style="left:175.5px;top:536px;height:38px"><span style="letter-spacing:0.25px">excel</span><span>顾问</span></div>
<div style="position:absolute;left:41.00px;width:400px;text-align:right;top:543.53px;font-size:23px;line-height:23px;color:#000;white-space:pre;">4200</div>
<div style="position:absolute;left:161.00px;width:400px;text-align:right;top:543.53px;font-size:23px;line-height:23px;color:#000;white-space:pre;">880</div>
<div style="position:absolute;left:281.00px;width:400px;text-align:right;top:543.53px;font-size:23px;line-height:23px;color:#000;white-space:pre;">700</div>
<div style="position:absolute;left:396.00px;width:400px;text-align:right;top:543.53px;font-size:23px;line-height:23px;color:#000;white-space:pre;">550</div>
<div style="position:absolute;left:516.00px;width:400px;text-align:right;top:543.53px;font-size:23px;line-height:23px;color:#000;white-space:pre;">3830</div>
<div class="cell" style="left:55px;top:575px;height:38px"><span>欢子</span></div>
<div class="cell" style="left:175.5px;top:575px;height:38px"><span style="letter-spacing:-1.1px">PPT</span><span>小白</span></div>
<div style="position:absolute;left:41.00px;width:400px;text-align:right;top:582.53px;font-size:23px;line-height:23px;color:#000;white-space:pre;">4900</div>
<div style="position:absolute;left:161.00px;width:400px;text-align:right;top:582.53px;font-size:23px;line-height:23px;color:#000;white-space:pre;">666</div>
<div style="position:absolute;left:281.00px;width:400px;text-align:right;top:582.53px;font-size:23px;line-height:23px;color:#000;white-space:pre;">450</div>
<div style="position:absolute;left:396.00px;width:400px;text-align:right;top:582.53px;font-size:23px;line-height:23px;color:#000;white-space:pre;">640</div>
<div style="position:absolute;left:516.00px;width:400px;text-align:right;top:582.53px;font-size:23px;line-height:23px;color:#000;white-space:pre;">4476</div>
<div class="cell" style="left:55px;top:614px;height:38px"><span>豪仔</span></div>
<div class="cell" style="left:175.5px;top:614px;height:38px"><span>打酱油的</span></div>
<div style="position:absolute;left:41.00px;width:400px;text-align:right;top:621.53px;font-size:23px;line-height:23px;color:#000;white-space:pre;">5100</div>
<div style="position:absolute;left:161.00px;width:400px;text-align:right;top:621.53px;font-size:23px;line-height:23px;color:#000;white-space:pre;">590</div>
<div style="position:absolute;left:281.00px;width:400px;text-align:right;top:621.53px;font-size:23px;line-height:23px;color:#000;white-space:pre;">600</div>
<div style="position:absolute;left:396.00px;width:400px;text-align:right;top:621.53px;font-size:23px;line-height:23px;color:#000;white-space:pre;">350</div>
<div style="position:absolute;left:516.00px;width:400px;text-align:right;top:621.53px;font-size:23px;line-height:23px;color:#000;white-space:pre;">4740</div>
<div class="cell" style="left:55px;top:653px;height:38px"><span>俊俊</span></div>
<div class="cell" style="left:175.5px;top:653px;height:38px"><span style="letter-spacing:1.1px">office</span><span>售后</span></div>
<div style="position:absolute;left:41.00px;width:400px;text-align:right;top:660.53px;font-size:23px;line-height:23px;color:#000;white-space:pre;">4600</div>
<div style="position:absolute;left:161.00px;width:400px;text-align:right;top:660.53px;font-size:23px;line-height:23px;color:#000;white-space:pre;">670</div>
<div style="position:absolute;left:281.00px;width:400px;text-align:right;top:660.53px;font-size:23px;line-height:23px;color:#000;white-space:pre;">320</div>
<div style="position:absolute;left:396.00px;width:400px;text-align:right;top:660.53px;font-size:23px;line-height:23px;color:#000;white-space:pre;">560</div>
<div style="position:absolute;left:516.00px;width:400px;text-align:right;top:660.53px;font-size:23px;line-height:23px;color:#000;white-space:pre;">4390</div>
<div class="cell" style="left:55px;top:692px;height:38px"><span>晚桥</span></div>
<div class="cell" style="left:175.5px;top:692px;height:38px"><span style="letter-spacing:-1.1px">PPT</span><span>顾问</span></div>
<div style="position:absolute;left:41.00px;width:400px;text-align:right;top:699.53px;font-size:23px;line-height:23px;color:#000;white-space:pre;">3700</div>
<div style="position:absolute;left:161.00px;width:400px;text-align:right;top:699.53px;font-size:23px;line-height:23px;color:#000;white-space:pre;">320</div>
<div style="position:absolute;left:281.00px;width:400px;text-align:right;top:699.53px;font-size:23px;line-height:23px;color:#000;white-space:pre;">260</div>
<div style="position:absolute;left:396.00px;width:400px;text-align:right;top:699.53px;font-size:23px;line-height:23px;color:#000;white-space:pre;">400</div>
<div style="position:absolute;left:516.00px;width:400px;text-align:right;top:699.53px;font-size:23px;line-height:23px;color:#000;white-space:pre;">3360</div>
<div class="cell" style="left:55px;top:731px;height:38px"><span>夏琪</span></div>
<div class="cell" style="left:175.5px;top:731px;height:38px"><span style="letter-spacing:1.5px">Word</span><span>专家</span></div>
<div style="position:absolute;left:41.00px;width:400px;text-align:right;top:738.53px;font-size:23px;line-height:23px;color:#000;white-space:pre;">5400</div>
<div style="position:absolute;left:161.00px;width:400px;text-align:right;top:738.53px;font-size:23px;line-height:23px;color:#000;white-space:pre;">200</div>
<div style="position:absolute;left:281.00px;width:400px;text-align:right;top:738.53px;font-size:23px;line-height:23px;color:#000;white-space:pre;">400</div>
<div style="position:absolute;left:396.00px;width:400px;text-align:right;top:738.53px;font-size:23px;line-height:23px;color:#000;white-space:pre;">600</div>
<div style="position:absolute;left:516.00px;width:400px;text-align:right;top:738.53px;font-size:23px;line-height:23px;color:#000;white-space:pre;">4600</div>
<div style="position:absolute;left:50px;top:380px;width:2px;height:39px;background:#217346;"></div>
<div style="position:absolute;left:170px;top:378px;width:157px;height:42px;box-sizing:border-box;border:2px solid #217346"></div>
<div style="position:absolute;left:322px;top:415px;width:7px;height:7px;box-sizing:border-box;border:1px solid #fff;background:#217346"></div>
<div style="position:absolute;left:1485px;top:302px;width:1px;height:613px;background:#a6a6a6;"></div>
<div style="position:absolute;left:1486px;top:302px;width:3px;height:613px;background:#e6e6e6;"></div>
<div style="position:absolute;left:1489px;top:270px;width:17px;height:644px;background:#d2d2d2;"></div>
<div style="position:absolute;left:1489px;top:270px;width:17px;height:20px;background:#fff;border:1px solid #c0c0c0;box-sizing:border-box"></div>
<div style="position:absolute;left:1489px;top:289px;width:17px;height:485px;background:#fff;border:1px solid #b4b4b4;border-right:none;box-sizing:border-box"></div>
<div style="position:absolute;left:1489px;top:897px;width:17px;height:17px;background:#fff;border:1px solid #c0c0c0;box-sizing:border-box"></div>
<svg class="ic" style="left:1493px;top:276px" width="11" height="7"><path d="M0.5 6l5-5.5 5 5.5z" fill="#777"/></svg>
<svg class="ic" style="left:1493px;top:902px" width="11" height="7"><path d="M0.5 1l5 5.5 5-5.5z" fill="#777"/></svg>
<div style="position:absolute;left:0px;top:914px;width:1506px;height:23px;background:#e6e6e6;"></div>
<div style="position:absolute;left:0px;top:914px;width:1486px;height:1px;background:#a6a6a6;"></div>
<div style="position:absolute;left:101px;top:914px;width:50px;height:23px;background:#fff;"></div>
<div style="position:absolute;left:100px;top:915px;width:1px;height:22px;background:#ababab;"></div>
<div style="position:absolute;left:151px;top:915px;width:1px;height:22px;background:#ababab;"></div>
<div style="position:absolute;left:230px;top:915px;width:1px;height:22px;background:#ababab;"></div>
<div class="cell" style="left:113px;top:913px;height:24px;font-size:16.5px;color:#217346"><span>1</span><span style="font-size:16px">月</span></div>
<div class="cell" style="left:165px;top:913px;height:24px;font-size:16.5px;color:#444"><span>1</span><span style="font-size:16px">月</span><span style="letter-spacing:0.8px"> (2)</span></div>
<svg class="ic" style="left:27px;top:924px" width="8" height="11"><path d="M7 0v10l-6.5-5z" fill="#c4c4c4"/></svg>
<svg class="ic" style="left:55px;top:924px" width="8" height="11"><path d="M0.5 0v10l6.5-5z" fill="#c4c4c4"/></svg>
<svg class="ic" style="left:263px;top:918px" width="22" height="22"><circle cx="10.5" cy="10.8" r="9.3" fill="none" stroke="#777" stroke-width="1.3"/><path d="M10.5 5.5v10.6M5.2 10.8h10.6" stroke="#777" stroke-width="1.6"/></svg>
<div style="position:absolute;left:922px;top:919px;width:565px;height:18px;background:#d2d2d2;"></div>
<div style="position:absolute;left:922px;top:919px;width:18px;height:18px;background:#fff;border:1px solid #c0c0c0;box-sizing:border-box"></div>
<div style="position:absolute;left:939px;top:919px;width:480px;height:18px;background:#fff;border:1px solid #b4b4b4;border-bottom:none;box-sizing:border-box"></div>
<div style="position:absolute;left:1470px;top:919px;width:18px;height:18px;background:#fff;border:1px solid #c0c0c0;box-sizing:border-box"></div>
<svg class="ic" style="left:926px;top:923px" width="8" height="11"><path d="M7 0.5v9.5l-6-4.75z" fill="#666"/></svg>
<svg class="ic" style="left:1476px;top:924px" width="8" height="11"><path d="M0.5 0v9.5l6-4.75z" fill="#666"/></svg>
<div style="position:absolute;left:903px;top:923px;width:2px;height:2px;background:#a0a0a0;"></div>
<div style="position:absolute;left:903px;top:927px;width:2px;height:2px;background:#a0a0a0;"></div>
<div style="position:absolute;left:903px;top:931px;width:2px;height:2px;background:#a0a0a0;"></div>
</body></html>
